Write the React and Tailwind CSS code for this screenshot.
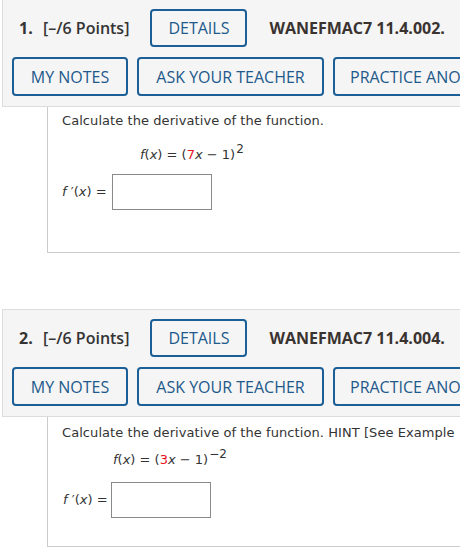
import React from 'react'

// Bouton contour bleu de l'en-tête
const OutlineButton = ({ children, className = '' }) => (
  <button
    className={`shrink-0 whitespace-nowrap rounded-[4px] border-2 border-[#1b5f96] bg-transparent px-[15px] text-[16px] leading-none text-[#22598b] ${className}`}
  >
    {children}
  </button>
)

const Header = ({ num, code, first }) => (
  <div
    className={`ml-[2px] w-[620px] border border-[#dcdcdc] bg-[#f5f5f5] pl-[9px] pt-[9px] pb-[10px] ${first ? 'mt-[-1px]' : ''}`}
  >
    <div className="flex h-[38px] items-center pl-[7px] text-[16px] font-semibold text-[#333]">
      <span className="w-[24px] font-bold">{num}.</span>
      <span>[–/6 Points]</span>
      <OutlineButton className="ml-[21px] h-[38px] w-[97px] font-normal">DETAILS</OutlineButton>
      <span className="ml-[22px] font-bold text-[#3a3330]">{code}</span>
    </div>
    <div className="mt-[10px] flex h-[39px] gap-[9px]">
      <OutlineButton className="h-[39px] w-[116px]">MY NOTES</OutlineButton>
      <OutlineButton className="h-[39px] w-[187px]">ASK YOUR TEACHER</OutlineButton>
      <OutlineButton className="h-[39px] w-[180px]">PRACTICE ANOTHER</OutlineButton>
    </div>
  </div>
)

const Math = ({ coef, exp }) => (
  <span className="whitespace-nowrap">
    <i>f</i>(<i>x</i>) = (<span className="text-[#e8141c]">{coef}</span><i>x</i> − 1)
    <span className="relative top-[-6px] ml-[1px] text-[12px]">{exp}</span>
  </span>
)

const Content = ({ hint, coef, exp, h, pt, mathGap, mathLeft, boxGap, labelLeft, boxLeft }) => (
  <div
    className="ml-[47px] w-[620px] border-b border-l border-[#cccccc] bg-white text-[13px] leading-[16px] text-[#333]"
    style={{ height: h, paddingTop: pt, fontFamily: '"DejaVu Sans", Verdana, sans-serif' }}
  >
    <div className="whitespace-nowrap pl-[14px] tracking-[0.07px]">
      Calculate the derivative of the function.{hint ? ' HINT [See Example 1.]' : ''}
    </div>
    <div style={{ marginTop: mathGap, paddingLeft: mathLeft - 48 }}>
      <Math coef={coef} exp={exp} />
    </div>
    <div className="flex items-center" style={{ marginTop: boxGap, paddingLeft: labelLeft - 48 }}>
      <span className="shrink-0 whitespace-nowrap" style={{ width: boxLeft - labelLeft }}>
        <i>f</i> ′(<i>x</i>) =
      </span>
      <div className="h-[36px] w-[100px] border border-[#8a8a8a] bg-white" />
    </div>
  </div>
)

export default function App() {
  return (
    <div className="h-[552px] w-[460px] overflow-hidden bg-white font-['Open_Sans',sans-serif]">
      <Header num={1} code="WANEFMAC7 11.4.002." first />
      <Content
        coef="7" exp="2" h={146} pt={6}
        mathGap={18} mathLeft={140} boxGap={11} labelLeft={62} boxLeft={112}
      />
      <div className="mt-[56px]">
        <Header num={2} code="WANEFMAC7 11.4.004." />
        <Content
          hint coef="3" exp="−2" h={130} pt={8}
          mathGap={11} mathLeft={113} boxGap={14} labelLeft={63} boxLeft={111}
        />
      </div>
    </div>
  )
}
